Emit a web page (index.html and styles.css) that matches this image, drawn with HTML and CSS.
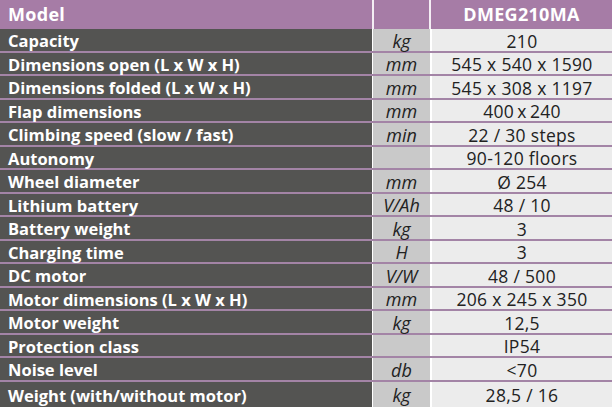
FILE: index.html
```html
<!DOCTYPE html>
<html>
<head>
<meta charset="utf-8">
<link rel="stylesheet" href="styles.css">
</head>
<body>
<div class="spec">
  <div class="row head">
    <div class="c name">Model</div>
    <div class="c unit"></div>
    <div class="c val">DMEG210MA</div>
  </div>
  <div class="row"><div class="c name">Capacity</div><div class="c unit">kg</div><div class="c val">210</div></div>
  <div class="row"><div class="c name">Dimensions open (L x W x H)</div><div class="c unit">mm</div><div class="c val">545 x 540 x 1590</div></div>
  <div class="row"><div class="c name">Dimensions folded (L x W x H)</div><div class="c unit">mm</div><div class="c val">545 x 308 x 1197</div></div>
  <div class="row"><div class="c name">Flap dimensions</div><div class="c unit">mm</div><div class="c val">400&#8201;x&#8201;240</div></div>
  <div class="row"><div class="c name">Climbing speed (slow / fast)</div><div class="c unit">min</div><div class="c val">22 / 30 steps</div></div>
  <div class="row"><div class="c name">Autonomy</div><div class="c unit"></div><div class="c val">90-120 floors</div></div>
  <div class="row"><div class="c name">Wheel diameter</div><div class="c unit">mm</div><div class="c val">Ø 254</div></div>
  <div class="row"><div class="c name">Lithium battery</div><div class="c unit">V/Ah</div><div class="c val">48 / 10</div></div>
  <div class="row"><div class="c name">Battery weight</div><div class="c unit">kg</div><div class="c val">3</div></div>
  <div class="row"><div class="c name">Charging time</div><div class="c unit">H</div><div class="c val">3</div></div>
  <div class="row"><div class="c name">DC motor</div><div class="c unit">V/W</div><div class="c val">48 / 500</div></div>
  <div class="row"><div class="c name">Motor dimensions (L x W x H)</div><div class="c unit">mm</div><div class="c val">206 x 245 x 350</div></div>
  <div class="row"><div class="c name">Motor weight</div><div class="c unit">kg</div><div class="c val">12,5</div></div>
  <div class="row"><div class="c name">Protection class</div><div class="c unit"></div><div class="c val">IP54</div></div>
  <div class="row"><div class="c name">Noise level</div><div class="c unit">db</div><div class="c val">&lt;70</div></div>
  <div class="row last"><div class="c name">Weight (with/without motor)</div><div class="c unit">kg</div><div class="c val">28,5 / 16</div></div>
</div>
</body>
</html>
```
FILE: styles.css
```css
html, body {
  margin: 0;
  padding: 0;
  background: #ffffff;
}
.spec {
  width: 612px;
  font-family: "Open Sans", "Noto Sans", sans-serif;
}
.row {
  display: flex;
  box-sizing: border-box;
  height: 23.5px;
  border-bottom: 2px solid #a384a6;
}
.row.head {
  height: 29px;
  border-bottom: none;
  background: #a67ca6;
}
.row.last {
  height: 25px;
  border-bottom: none;
}
.c {
  display: flex;
  align-items: center;
  box-sizing: border-box;
  white-space: nowrap;
  line-height: 18px;
}
.name {
  width: 372px;
  padding-left: 8px;
  padding-top: 3px;
  background: #545452;
  color: #ffffff;
  font-weight: 700;
  font-size: 16.5px;
}
.unit {
  width: 57px;
  margin-left: 1px;
  padding-top: 2px;
  justify-content: center;
  background: #c9c9c9;
  color: #222222;
  font-style: italic;
  font-size: 18px;
}
.val {
  flex: 1;
  margin-left: 2px;
  padding-top: 2px;
  justify-content: center;
  background: #ececec;
  color: #222222;
  font-size: 17.5px;
  letter-spacing: 0.3px;
}
.head .name,
.head .unit,
.head .val {
  background: #a67ca6;
  color: #ffffff;
  font-weight: 700;
  font-style: normal;
  font-size: 18px;
  letter-spacing: 0.3px;
  padding-top: 0;
  padding-bottom: 2px;
}
.head .unit,
.head .val {
  border-left: 2px solid #f4eef4;
  margin-left: 0;
}
```
